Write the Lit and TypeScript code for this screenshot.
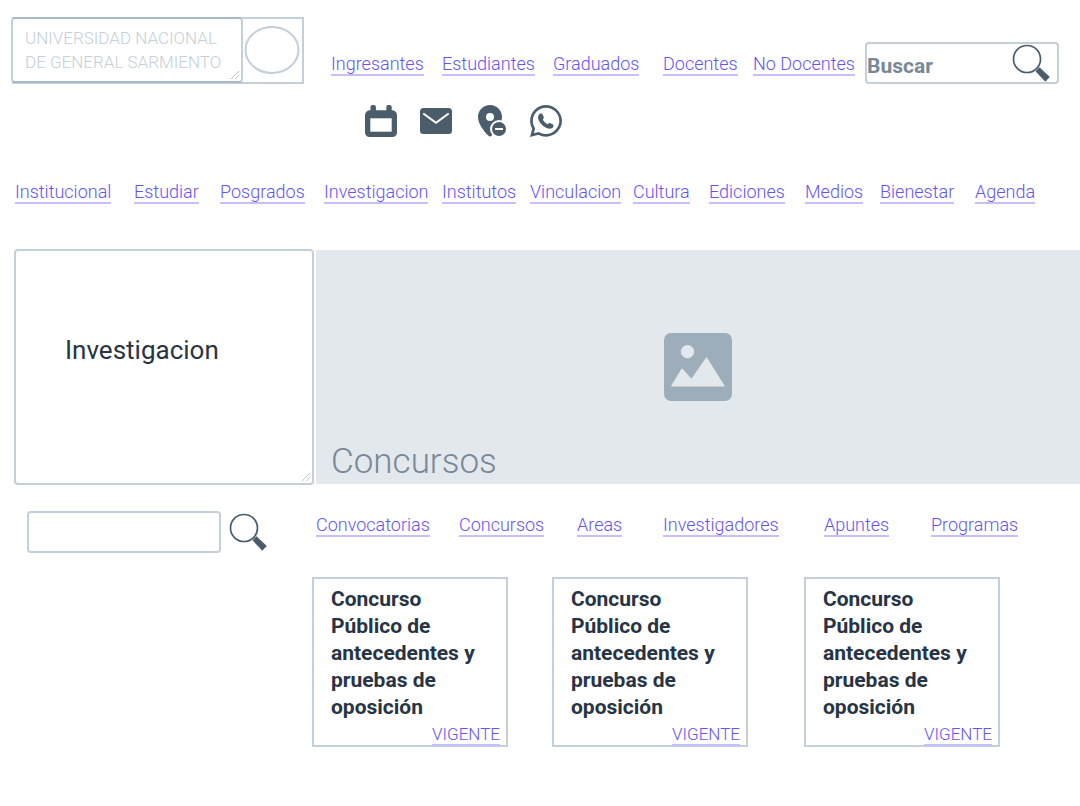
import { LitElement, html, css, svg } from "lit";
import { customElement, property } from "lit/decorators.js";

const audiences = ["Ingresantes", "Estudiantes", "Graduados", "Docentes", "No Docentes"];
const sections = [
  "Institucional", "Estudiar", "Posgrados", "Investigacion", "Institutos", "Vinculacion",
  "Cultura", "Ediciones", "Medios", "Bienestar", "Agenda",
];
const topics = ["Convocatorias", "Concursos", "Areas", "Investigadores", "Apuntes", "Programas"];
const contests = [1, 2, 3].map(() => ({
  title: "Concurso Público de antecedentes y pruebas de oposición",
  status: "VIGENTE",
}));

const calendarIcon = svg`
  <path d="M5.500 5.200V2a2 2 0 0 1 2-2h1.400a2 2 0 0 1 2 2v3.200h10.400V2a2 2 0 0 1 2-2h1.400a2 2 0 0 1 2 2v3.200A5 5 0 0 1 32 10v17.500a4.500 4.500 0 0 1-4.500 4.500h-23A4.500 4.500 0 0 1 0 27.500V10a5 5 0 0 1 5.500-4.800z"/>
  <path class="hole" d="M5.300 13.300h21.400v13.400H5.300z"/>`;
const mailIcon = svg`
  <rect y="3" width="32" height="26" rx="3.500"/>
  <path class="fold" d="M3.300 8.500 16 17.800l12.700-9.300"/>`;
const placeIcon = svg`
  <path d="M15 0C8.300 0 3 5.200 3 11.800c0 6.600 5 13.600 10.500 19 .9.900 2.100.9 3 0C22 25.400 27 18.400 27 11.800 27 5.200 21.700 0 15 0z"/>
  <circle class="hole" cx="15" cy="12" r="4"/>
  <circle class="hole" cx="24" cy="24" r="9"/>
  <circle cx="24" cy="24" r="7"/>
  <path class="hole" d="M20 23h8v2h-8z"/>`;
const chatIcon = svg`
  <g transform="scale(.0714) translate(0 -32)">
    <path d="M380.900 97.100C339 55.100 283.200 32 223.900 32c-122.400 0-222 99.600-222 222 0 39.100 10.200 77.300 29.600 111L0 480l117.700-30.900c32.400 17.700 68.900 27 106.100 27h.1c122.300 0 224.100-99.600 224.100-222 0-59.300-25.200-115-67.100-157zm-157 341.600c-33.200 0-65.700-8.900-94-25.700l-6.700-4-69.800 18.300L72 359.200l-4.400-7c-18.500-29.400-28.200-63.300-28.200-98.200 0-101.700 82.800-184.500 184.600-184.500 49.300 0 95.600 19.200 130.400 54.100 34.800 34.900 56.200 81.200 56.100 130.500 0 101.800-84.900 184.600-186.600 184.600z"/>
  </g>
  <path d="M9.600 9c1-.8 2.600-.4 3.200.8l1 2.400c.4 1-.7 1.700-1 2.400 1 2 2.600 3.600 4.600 4.600.8-.6 1.400-1.600 2.400-1.200l2.800 1.200c1 .5 1.200 1.800.6 2.800-1 1.600-3 2-5 1.400-4.600-1.400-8.200-4.800-9.800-9-.6-2-.4-4.200 1.200-5.400z"/>`;

const shortcuts = [
  { label: "Calendario", icon: calendarIcon },
  { label: "Correo", icon: mailIcon },
  { label: "Ubicación", icon: placeIcon },
  { label: "WhatsApp", icon: chatIcon },
];

@customElement("search-box")
class SearchBox extends LitElement {
  @property() placeholder = "";
  @property({ type: Boolean, reflect: true }) inset = false;

  static styles = css`
    :host { display: flex; align-items: center; gap: 8px; }
    .field { display: flex; align-items: center; flex: 1; min-width: 0; height: 42px;
      box-sizing: border-box; border: 2px solid #c3cfd9; border-radius: 4px; background: #fff; }
    :host([inset]) .field { padding-right: 7px; }
    input { flex: 1; min-width: 0; height: 100%; box-sizing: border-box; border: 0; outline: 0;
      padding: 6px 0 0; background: none; font: 700 21px Roboto, sans-serif; color: #788896; }
    input::placeholder { color: #788896; opacity: 1; }
    button { border: 0; padding: 0; background: none; width: 38px; height: 38px; flex: none; cursor: pointer; }
    svg { display: block; width: 38px; height: 38px; }
    circle { fill: none; stroke: #4b5d6b; stroke-width: 1.700; }
    path { fill: #4b5d6b; }
  `;

  render() {
    const go = html`<button type="button" aria-label="Buscar">
      <svg viewBox="0 0 38 38"><circle cx="15" cy="15" r="13.500"/><path d="m23.500 27.300 4-4 10.300 9.700-4.500 4.700z"/></svg>
    </button>`;
    return html`
      <div class="field">
        <input type="text" aria-label="Buscar" placeholder=${this.placeholder}>
        ${this.inset ? go : ""}
      </div>
      ${this.inset ? "" : go}`;
  }
}

@customElement("app-root")
class AppRoot extends LitElement {
  static styles = css`
    :host { display: block; background: #fff; font-family: Roboto, sans-serif; color: #273444; }
    a { color: #6554f0; text-decoration: none; }
    nav a, .status { font-size: 18px; font-weight: 300; line-height: 20px; border-bottom: 2px solid #c5c0fc;
      justify-self: start; white-space: nowrap; }

    .top { display: grid; grid-template-columns: 292px 1fr 194px; column-gap: 16px; padding: 17px 21px 0 12px; }
    .logo { display: flex; align-items: flex-start; height: 67px; box-sizing: border-box;
      border: 2px solid #c3cfd9; }
    .note { position: relative; display: flex; }
    .logo .note { width: 232px; height: 66px; margin: -2px 0 0 -3px; }
    textarea { flex: 1; min-width: 0; box-sizing: border-box; resize: none; outline: 0; overflow: hidden;
      border: 2px solid #c3cfd9; border-radius: 4px; background: #fff; font-family: inherit; }
    .logo textarea { border-color: #a9b9c7 #c3cfd9; padding: 7px 12px; font-size: 17px; font-weight: 300;
      line-height: 24px; color: #c3cfd9; }
    .grip { position: absolute; right: 3px; bottom: 3px; width: 10px; height: 10px; fill: none; stroke: #b8c4ce; }
    .seal { width: 56px; height: 50px; margin: 6px 0 0 1px; fill: none; stroke: #c3cfd9; stroke-width: 2; }

    .audiences { display: grid; padding: 37px 0 0 11px;
      grid-template-columns: minmax(0, 111fr) minmax(0, 111fr) minmax(0, 110fr) minmax(0, 90fr) minmax(0, 96fr); }
    .shortcuts { display: flex; gap: 23px; padding: 29px 0 0 45px; }
    .shortcuts a, .shortcuts svg { display: block; width: 32px; height: 32px; }
    .shortcuts svg { fill: #4b5d6b; }
    .hole { fill: #fff; }
    .fold { fill: none; stroke: #fff; stroke-width: 2; }
    .top search-box { align-self: start; margin-top: 25px; }

    .sections { display: grid; padding: 45px 0 0 15px;
      grid-template-columns: 119fr 86fr 104fr 118fr 88fr 103fr 76fr 96fr 75fr 95fr 105fr; }

    .hero { display: flex; gap: 2px; padding: 45px 0 0 14px; }
    .hero .note { width: 300px; height: 236px; }
    .hero textarea { padding: 83px 49px; font-size: 26px; line-height: 32px; color: #273444; }
    .banner { flex: 1; margin: 1px 0; display: grid; grid-template-rows: 1fr; background: #e2e8ec; }
    .banner svg, .banner h1 { grid-area: 1 / 1; }
    .banner svg { place-self: center; width: 68px; height: 68px; fill: #9eadba; }
    .banner .light { fill: #e2e8ec; stroke: #e2e8ec; stroke-linejoin: round; }
    h1 { align-self: end; margin: 0; padding: 0 15px 1px; font-size: 35px; font-weight: 300; line-height: 42px; color: #788896; }

    .body { display: grid; grid-template-columns: 240px 1fr; column-gap: 45px; align-items: start; padding: 26px 0 24px 27px; }
    .topics { display: grid; grid-template-columns: 143fr 118fr 86fr 161fr 107fr 149fr; padding: 4px 0 0 4px; }
    .cards { display: grid; grid-template-columns: 240fr 252fr 276fr; padding-top: 40px; }
    .card { display: flex; flex-direction: column; width: 196px; min-height: 170px; box-sizing: border-box;
      border: 2px solid #c3cfd9; padding: 7px 6px 0 17px; }
    h2 { margin: 0; padding-right: 12px; font-size: 21px; font-weight: 700; line-height: 27px; }
    .status { align-self: flex-end; margin: 3px 0 -2px; font-size: 17px; }
  `;

  note(text: string, label: string) {
    return html`<div class="note">
      <textarea aria-label=${label} .value=${text}></textarea>
      <svg class="grip" viewBox="0 0 10 10"><path d="M1 9 9 1M5.500 9 9 5"/></svg>
    </div>`;
  }

  links(items: string[]) {
    return items.map((item) => html`<a href="#">${item}</a>`);
  }

  render() {
    return html`
      <header class="top">
        <div class="logo">
          ${this.note("UNIVERSIDAD NACIONAL\nDE GENERAL SARMIENTO", "Universidad")}
          <svg class="seal" viewBox="0 0 56 50"><ellipse cx="28" cy="25" rx="26.500" ry="23"/></svg>
        </div>
        <div>
          <nav class="audiences" aria-label="Perfiles">${this.links(audiences)}</nav>
          <div class="shortcuts">
            ${shortcuts.map((s) => html`<a href="#" aria-label=${s.label}><svg viewBox="0 0 32 32">${s.icon}</svg></a>`)}
          </div>
        </div>
        <search-box inset placeholder="Buscar"></search-box>
      </header>
      <nav class="sections" aria-label="Secciones">${this.links(sections)}</nav>
      <section class="hero">
        ${this.note("Investigacion", "Sección")}
        <div class="banner">
          <svg viewBox="0 0 68 68">
            <rect width="68" height="68" rx="7"/>
            <circle class="light" cx="23.500" cy="18.700" r="6.200"/>
            <path class="light" d="M7.500 53 18 35.700l9.500 10.600 15-21.500L60.300 53z"/>
          </svg>
          <h1>Concursos</h1>
        </div>
      </section>
      <main class="body">
        <search-box></search-box>
        <div>
          <nav class="topics" aria-label="Temas">${this.links(topics)}</nav>
          <div class="cards">
            ${contests.map((c) => html`<article class="card"><h2>${c.title}</h2><a class="status" href="#">${c.status}</a></article>`)}
          </div>
        </div>
      </main>`;
  }
}
